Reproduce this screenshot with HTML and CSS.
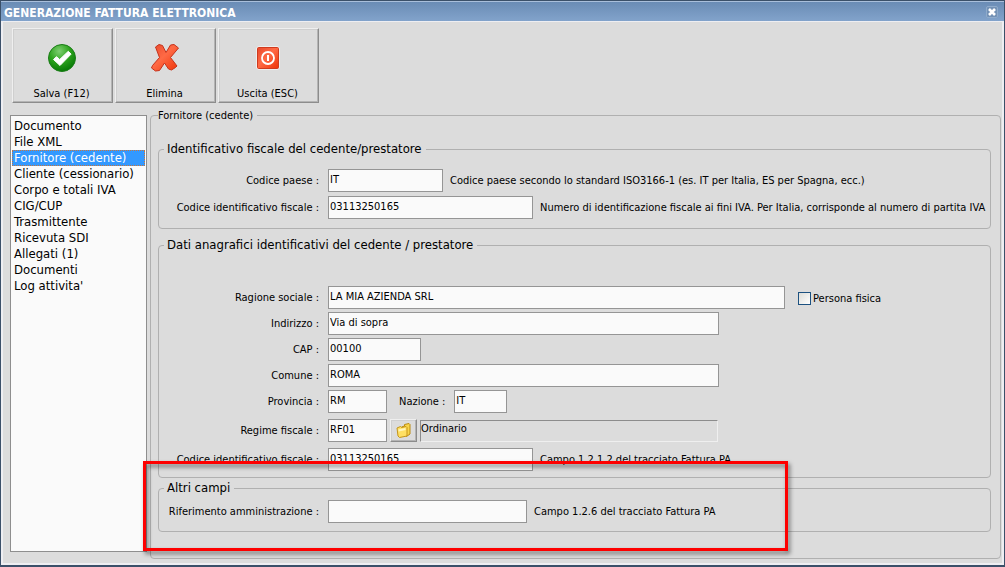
FILE: index.html
```html
<!DOCTYPE html>
<html lang="it">
  <head>
    <meta charset="utf-8">
    <meta name="viewport" content="width=device-width, initial-scale=1.0">
    <title>Generazione fattura elettronica</title>
    <link rel="stylesheet" href="styles.css">
  </head>

  <body>
    <div class="window">
      <header class="titlebar">
        <h1>GENERAZIONE FATTURA ELETTRONICA</h1>
        <button type="button" class="close" aria-label="Chiudi">
          <svg width="10" height="10" viewBox="0 0 10 10"><path d="M2 2l6 6M8 2l-6 6" stroke="#fff" stroke-width="2.6"/></svg>
        </button>
      </header>

      <div class="client">
        <div class="toolbar">
          <button type="button" class="tool">
            <svg width="30" height="30" viewBox="0 0 30 30">
              <defs>
                <radialGradient id="green" cx="40%" cy="25%" r="75%">
                  <stop offset="0" stop-color="#7fcf72"/>
                  <stop offset=".5" stop-color="#2fa51f"/>
                  <stop offset="1" stop-color="#087a06"/>
                </radialGradient>
              </defs>
              <circle cx="15" cy="15" r="13.5" fill="url(#green)" stroke="#1b7d18"/>
              <path d="M6.500 16.500l3-2.800 3.200 2.800 8.600-8.200 2.800 2.800L13 22.500z" fill="#fff" stroke="#fff" stroke-linejoin="round"/>
            </svg>
            <span>Salva (F12)</span>
          </button>
          <button type="button" class="tool">
            <svg width="30" height="30" viewBox="0 0 30 30">
              <defs>
                <linearGradient id="red" x1="0" y1="0" x2="1" y2="1">
                  <stop offset="0" stop-color="#e8482c"/>
                  <stop offset=".45" stop-color="#ff6a45"/>
                  <stop offset="1" stop-color="#ee3206"/>
                </linearGradient>
              </defs>
              <path d="M5.500 4L9 1.500l3.500 1 3.500 7 4.500-7.500 3.500-.5 4.500 3.500-8 9.500 6.500 8.500-1.500 1.500-4 2.500-3-1-4-6-5 7.500-4 .5-4-3 1-2.500L9.500 14.500z" fill="url(#red)" stroke="#c5321b"/>
            </svg>
            <span>Elimina</span>
          </button>
          <button type="button" class="tool">
            <svg width="30" height="30" viewBox="0 0 30 30">
              <rect x="3.500" y="3.500" width="23" height="23" rx="2" fill="#fff"/>
              <rect x="4.500" y="4.500" width="21" height="21" rx="1" fill="url(#red)" stroke="#cf3b1e"/>
              <circle cx="15" cy="15" r="6" fill="none" stroke="#fff" stroke-width="1.800"/>
              <path d="M15 12v6" stroke="#fff" stroke-width="2"/>
            </svg>
            <span>Uscita (ESC)</span>
          </button>
        </div>

        <div class="main">
          <nav class="sections">
            <a href="#">Documento</a>
            <a href="#">File XML</a>
            <a href="#" class="selected" aria-current="page">Fornitore (cedente)</a>
            <a href="#">Cliente (cessionario)</a>
            <a href="#">Corpo e totali IVA</a>
            <a href="#">CIG/CUP</a>
            <a href="#">Trasmittente</a>
            <a href="#">Ricevuta SDI</a>
            <a href="#">Allegati (1)</a>
            <a href="#">Documenti</a>
            <a href="#">Log attivita'</a>
          </nav>

          <form class="panel">
            <fieldset class="outer">
              <legend>Fornitore (cedente)</legend>

              <fieldset class="group fiscale">
                <legend>Identificativo fiscale del cedente/prestatore</legend>
                <div class="row">
                  <label class="name" for="paese">Codice paese :</label>
                  <input type="text" id="paese" class="w-code" value="IT">
                  <span class="note">Codice paese secondo lo standard ISO3166-1 (es. IT per Italia, ES per Spagna, ecc.)</span>
                </div>
                <div class="row">
                  <label class="name" for="codice">Codice identificativo fiscale :</label>
                  <input type="text" id="codice" class="w-id" value="03113250165">
                  <span class="note">Numero di identificazione fiscale ai fini IVA. Per Italia, corrisponde al numero di partita IVA</span>
                </div>
              </fieldset>

              <fieldset class="group anagrafica">
                <legend>Dati anagrafici identificativi del cedente / prestatore</legend>
                <div class="row">
                  <label class="name" for="ragione">Ragione sociale :</label>
                  <input type="text" id="ragione" class="w-name" value="LA MIA AZIENDA SRL">
                  <label class="check"><input type="checkbox"> Persona fisica</label>
                </div>
                <div class="row">
                  <label class="name" for="indirizzo">Indirizzo :</label>
                  <input type="text" id="indirizzo" class="w-address" value="Via di sopra">
                </div>
                <div class="row">
                  <label class="name" for="cap">CAP :</label>
                  <input type="text" id="cap" class="w-cap" value="00100">
                </div>
                <div class="row">
                  <label class="name" for="comune">Comune :</label>
                  <input type="text" id="comune" class="w-address" value="ROMA">
                </div>
                <div class="row">
                  <label class="name" for="provincia">Provincia :</label>
                  <input type="text" id="provincia" class="w-short" value="RM">
                  <label class="inline" for="nazione">Nazione :</label>
                  <input type="text" id="nazione" class="w-nation" value="IT">
                </div>
                <div class="row spaced">
                  <label class="name" for="regime">Regime fiscale :</label>
                  <input type="text" id="regime" class="w-short" value="RF01">
                  <button type="button" class="browse" aria-label="Cerca regime fiscale">
                    <svg width="16" height="16" viewBox="0 0 16 16">
                      <path d="M5.500 4l3-1V1.500l4.500-1 1 1v9.500l-3.500 2.500z" fill="#f8d54a" stroke="#b98a12"/>
                      <path d="M1 5l3.500-1.500 1 1 4.500-1 1 1v8.500l-7.500 1.500-1.500-1.500z" fill="#ffe063" stroke="#c4951a"/>
                      <path d="M2.500 7.500l7-1.500" stroke="#fff6bd" stroke-width="2"/>
                    </svg>
                  </button>
                  <input type="text" class="w-desc" value="Ordinario" aria-label="Descrizione regime fiscale" readonly>
                </div>
                <div class="row spaced">
                  <label class="name" for="codice2">Codice identificativo fiscale :</label>
                  <input type="text" id="codice2" class="w-id" value="03113250165">
                  <span class="note">Campo 1.2.1.2 del tracciato Fattura PA</span>
                </div>
              </fieldset>

              <fieldset class="group altri">
                <legend>Altri campi</legend>
                <div class="row">
                  <label class="name" for="riferimento">Riferimento amministrazione :</label>
                  <input type="text" id="riferimento" class="w-ref">
                  <span class="note">Campo 1.2.6 del tracciato Fattura PA</span>
                </div>
                <div class="highlight"></div>
              </fieldset>
            </fieldset>
          </form>
        </div>
      </div>
    </div>
  </body>
</html>
```

FILE: styles.css
```css
* {
  box-sizing: border-box;
}

body {
  margin: 0;
  font-family: Tahoma, "DejaVu Sans Condensed", "DejaVu Sans", sans-serif;
  font-size: 11px;
  line-height: 14px;
  color: #000;
}

button, input {
  font: inherit;
  color: inherit;
}

.window {
  display: flex;
  flex-direction: column;
  min-height: 100vh;
  background: #dcdcdc;
  border: 1px solid #3b5069;
  border-bottom-width: 2px;
}

.titlebar {
  display: flex;
  align-items: center;
  justify-content: space-between;
  height: 20px;
  padding: 3px 6px 0 3px;
  background: linear-gradient(#6a8cb5, #82a3cb);
  border-top: 1px solid #a9bfdb;
}

.titlebar h1 {
  margin: 0;
  font-size: 12px;
  line-height: 16px;
  color: #fff;
}

.close {
  display: flex;
  margin-bottom: 2px;
  padding: 0;
  background: #7391b5;
  border: 1px solid #8fabcb;
  border-radius: 2px;
}

.client {
  display: flex;
  flex: 1;
  flex-direction: column;
  padding: 6px 1px 4px 7px;
  border: 2px solid #eeeef2;
  border-top-width: 1px;
}

.toolbar {
  display: flex;
  gap: 2px;
  padding-left: 2px;
}

.tool {
  display: flex;
  flex-direction: column;
  align-items: center;
  justify-content: space-between;
  width: 101px;
  height: 75px;
  padding: 14px 2px 1px 0;
  background: #dcdcdc;
}

.tool, .browse {
  border: 1px solid;
  border-color: #efefef #8c8c8c #8c8c8c #efefef;
  box-shadow: inset -1px -1px #b4b4b4, inset 1px 1px #cfcfcf;
}

.main {
  display: flex;
  flex: 1;
  gap: 3px;
  padding-top: 4px;
}

.sections {
  display: flex;
  flex-direction: column;
  flex: none;
  width: 137px;
  margin: 8px 0 7px;
  padding: 2px 1px;
  background: #fafafa;
  border: 1px solid #8e8e8e;
  font-size: 13px;
  line-height: 16px;
}

.sections a {
  padding: 0 2px;
  color: inherit;
  text-decoration: none;
  white-space: nowrap;
}

.sections .selected {
  padding: 0 1px;
  background: #3399ff;
  border: 1px dotted #c8763c;
  line-height: 14px;
  color: #fff;
}

.panel {
  display: flex;
  flex: 1;
  min-width: 0;
}

fieldset {
  min-width: 0;
  margin: 0;
  border: 1px solid #b0b0b0;
  border-radius: 4px;
}

.outer {
  flex: 1;
  padding: 18px 9px 0 7px;
}

.outer > legend {
  padding: 2px 4px 0 0;
}

.group {
  padding: 0;
}

.group > legend {
  margin-left: 5px;
  padding: 0 4px 0 3px;
  font-size: 13px;
  line-height: 16px;
}

.group .row + .row {
  margin-top: 3px;
}

.group .row + .spaced {
  margin-top: 6px;
}

.fiscale {
  padding: 12px 0 9px;
}

.fiscale .row + .row {
  margin-top: 4px;
}

.anagrafica {
  margin-top: 8px;
  padding: 33px 0 6px;
}

.altri {
  position: relative;
  margin-top: 2px;
  padding: 4px 0 8px;
}

.row {
  display: flex;
  align-items: center;
  white-space: nowrap;
}

.name {
  flex: none;
  width: 160px;
  margin-right: 9px;
  text-align: right;
}

.note {
  margin-left: 7px;
}

.inline {
  margin: 0 9px 0 12px;
}

input[type="text"] {
  height: 23px;
  padding: 0 2px 2px 1px;
  background: #fafafa;
  border: 1px solid #959595;
}

.w-code { width: 115px; }
.w-id { width: 205px; }
.w-name { width: 457px; }
.w-address { width: 391px; }
.w-cap { width: 93px; }
.w-short { width: 59px; }
.w-nation { width: 53px; }
.w-ref { width: 199px; }

input[type="text"].w-desc {
  width: 298px;
  height: 22px;
  padding: 0 0 4px;
  background: #dcdcdc;
  border-color: #8c8c8c #efefef #efefef #8c8c8c;
}

.browse {
  display: flex;
  align-items: center;
  justify-content: center;
  width: 27px;
  height: 23px;
  margin: 0 3px;
  padding: 0;
  background: #dcdcdc;
}

.check {
  display: flex;
  align-items: center;
  gap: 2px;
  margin-left: 13px;
  padding-top: 2px;
}

.check input {
  appearance: none;
  width: 13px;
  height: 13px;
  margin: 0;
  background: linear-gradient(135deg, #dcdcd7, #fff);
  border: 1px solid #1c5180;
}

.highlight {
  position: absolute;
  top: -35px;
  bottom: -20px;
  left: -16px;
  width: 645px;
  border: 3px solid #fe0000;
  filter: drop-shadow(2px 3px 2px rgba(0, 0, 0, .5));
  pointer-events: none;
}
```
